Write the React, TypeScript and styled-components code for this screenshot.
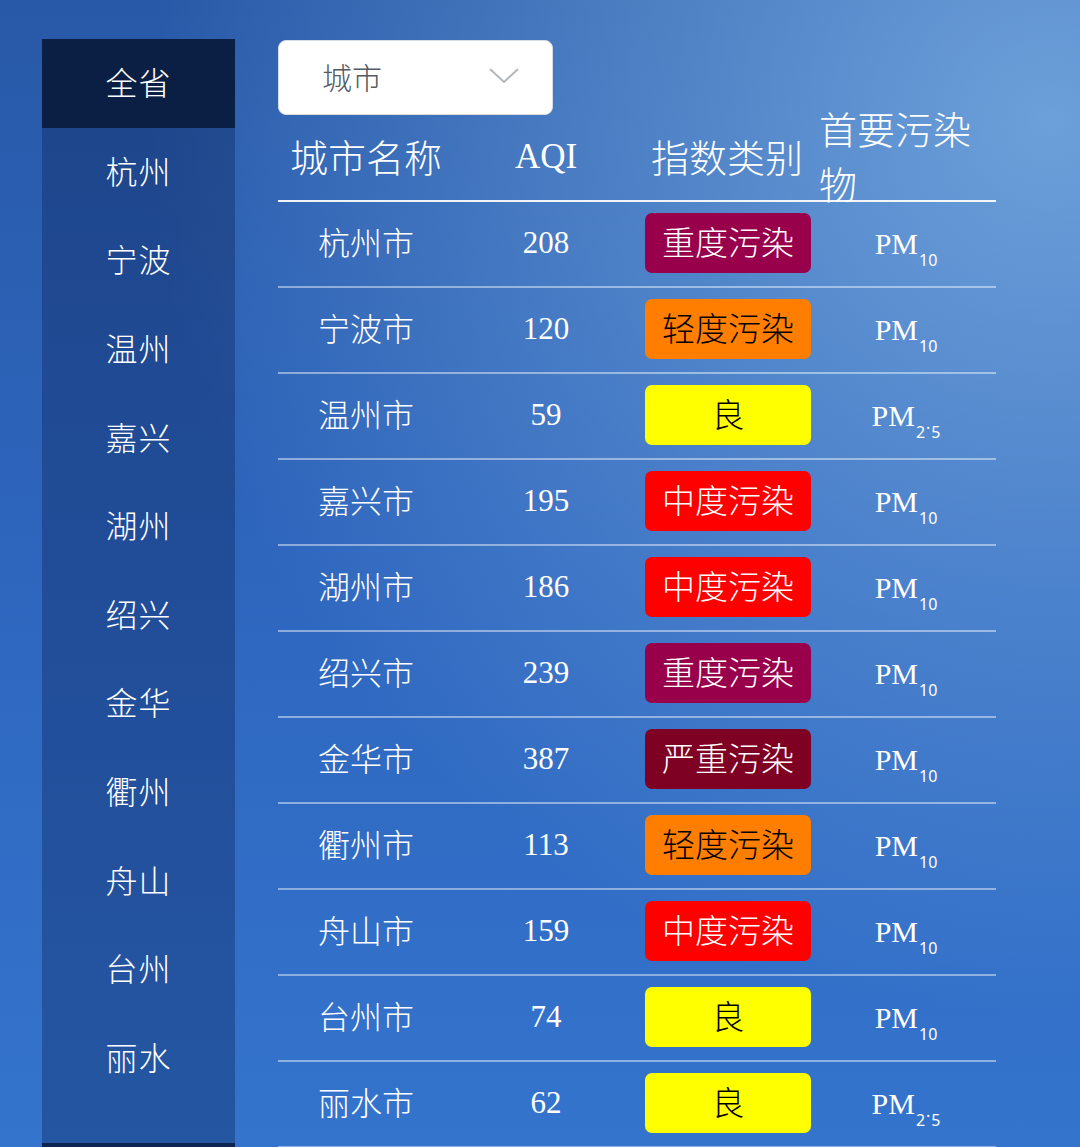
import styled, { createGlobalStyle } from "styled-components";

const GlobalStyle = createGlobalStyle`
  html, body {
    margin: 0;
    padding: 0;
  }
  body {
    font-family: "Liberation Serif", "Noto Sans CJK SC", serif;
    background: #2f68bf;
  }
`;

type Level = "heavy" | "light" | "good" | "moderate" | "severe";

interface Row {
  city: string;
  aqi: number;
  level: Level;
  label: string;
  pollutant: "10" | "2.5";
}

const levelColors: Record<Level, { bg: string; fg: string }> = {
  heavy: { bg: "#99004c", fg: "#ffffff" },
  light: { bg: "#ff7e00", fg: "#000000" },
  good: { bg: "#ffff00", fg: "#000000" },
  moderate: { bg: "#ff0000", fg: "#ffffff" },
  severe: { bg: "#7e0023", fg: "#ffffff" },
};

const regions = ["全省", "杭州", "宁波", "温州", "嘉兴", "湖州", "绍兴", "金华", "衢州", "舟山", "台州", "丽水"];

const rows: Row[] = [
  { city: "杭州市", aqi: 208, level: "heavy", label: "重度污染", pollutant: "10" },
  { city: "宁波市", aqi: 120, level: "light", label: "轻度污染", pollutant: "10" },
  { city: "温州市", aqi: 59, level: "good", label: "良", pollutant: "2.5" },
  { city: "嘉兴市", aqi: 195, level: "moderate", label: "中度污染", pollutant: "10" },
  { city: "湖州市", aqi: 186, level: "moderate", label: "中度污染", pollutant: "10" },
  { city: "绍兴市", aqi: 239, level: "heavy", label: "重度污染", pollutant: "10" },
  { city: "金华市", aqi: 387, level: "severe", label: "严重污染", pollutant: "10" },
  { city: "衢州市", aqi: 113, level: "light", label: "轻度污染", pollutant: "10" },
  { city: "舟山市", aqi: 159, level: "moderate", label: "中度污染", pollutant: "10" },
  { city: "台州市", aqi: 74, level: "good", label: "良", pollutant: "10" },
  { city: "丽水市", aqi: 62, level: "good", label: "良", pollutant: "2.5" },
];

const cjk = `"Noto Sans CJK SC", sans-serif`;

/* ── Page ── */

const Page = styled.div`
  display: flex;
  align-items: flex-start;
  gap: 43px;
  height: 1147px;
  overflow: hidden;
  padding: 39px 0 0 42px;
  box-sizing: border-box;
  background:
    radial-gradient(ellipse 900px 900px at 1050px 120px, rgba(120, 172, 226, 0.85), rgba(120, 172, 226, 0) 100%),
    linear-gradient(180deg, #2859a8 0%, #2e66be 50%, #3474cd 100%);
  color: #ffffff;
`;

/* ── Sidebar ── */

const Sidebar = styled.nav`
  display: flex;
  flex-direction: column;
  width: 193px;
  flex-shrink: 0;
  padding-bottom: 41px;
  background: rgba(10, 28, 80, 0.34);
  border-bottom: 6px solid #0d2550;
`;

const SideItem = styled.div<{ $active?: boolean }>`
  height: 88.6px;
  display: flex;
  align-items: center;
  justify-content: center;
  padding-bottom: 4px;
  box-sizing: border-box;
  font-family: ${cjk};
  font-weight: 300;
  font-size: 32px;
  letter-spacing: 1px;
  color: #ffffff;
  background: ${(p) => (p.$active ? "#0b1f44" : "transparent")};
`;

/* ── Main ── */

const Main = styled.div`
  display: flex;
  flex-direction: column;
  width: 718px;
  padding-top: 1px;
`;

const Select = styled.div`
  width: 275px;
  height: 75px;
  box-sizing: border-box;
  display: flex;
  align-items: center;
  justify-content: space-between;
  padding: 0 32px 4px 43px;
  background: #ffffff;
  border: 1px solid #d8dce4;
  border-radius: 8px;
  font-family: ${cjk};
  font-weight: 300;
  font-size: 30px;
  color: #555a60;
`;

const Chevron = () => (
  <svg width="32" height="18" viewBox="0 0 32 18" fill="none">
    <path d="M2 2 L16 15 L30 2" stroke="#b4b8bf" strokeWidth="2" strokeLinejoin="round" />
  </svg>
);

const Table = styled.div`
  display: flex;
  flex-direction: column;
`;

const Grid = styled.div`
  display: grid;
  grid-template-columns: 176px 184px 178px 180px;
`;

const HeadRow = styled(Grid)`
  grid-template-rows: 85px;
  height: 85px;
  border-bottom: 2px solid rgba(255, 255, 255, 0.92);
`;

const HeadCell = styled.div<{ $left?: boolean }>`
  display: flex;
  align-items: center;
  justify-content: ${(p) => (p.$left ? "flex-start" : "center")};
  padding-left: ${(p) => (p.$left ? "3px" : "0")};
  padding-bottom: 5px;
  box-sizing: border-box;
  height: 85px;
  font-family: ${cjk};
  font-weight: 300;
  font-size: 38px;
  line-height: 55px;
  color: #ffffff;
  white-space: ${(p) => (p.$left ? "normal" : "nowrap")};
`;

const AqiHead = styled(HeadCell)`
  font-family: "Liberation Serif", serif;
  font-weight: 400;
  font-size: 35px;
  padding-bottom: 2px;
`;

const BodyRow = styled(Grid)`
  height: 86px;
  box-sizing: border-box;
  border-bottom: 2px solid rgba(255, 255, 255, 0.45);
`;

const Cell = styled.div`
  display: flex;
  align-items: center;
  justify-content: center;
  color: #ffffff;
`;

const CityName = styled(Cell)`
  font-family: ${cjk};
  font-weight: 300;
  font-size: 32px;
  padding-bottom: 6px;
`;

const Aqi = styled(Cell)`
  font-size: 31px;
  padding-bottom: 2px;
`;

const Badge = styled.div<{ $bg: string; $fg: string }>`
  width: 166px;
  height: 60px;
  margin-left: 2px;
  margin-bottom: 2px;
  border-radius: 7px;
  display: flex;
  align-items: center;
  justify-content: center;
  padding-bottom: 4px;
  box-sizing: border-box;
  background: ${(p) => p.$bg};
  color: ${(p) => p.$fg};
  font-family: ${cjk};
  font-weight: 300;
  font-size: 33px;
`;

const Pollutant = styled(Cell)`
  font-size: 30px;
`;

const Formula = styled.span`
  white-space: nowrap;
`;

const Sub = styled.span`
  font-family: "Noto Sans", sans-serif;
  font-size: 16px;
  position: relative;
  top: 12px;
  margin-left: 1px;
`;

const SubDot = styled.span`
  position: relative;
  top: -9px;
  margin: 0 1px;
`;

export default function App() {
  return (
    <>
      <GlobalStyle />
      <Page>
        <Sidebar>
          {regions.map((r, i) => (
            <SideItem key={r} $active={i === 0}>
              {r}
            </SideItem>
          ))}
        </Sidebar>
        <Main>
          <Select>
            <span>城市</span>
            <Chevron />
          </Select>
          <Table>
            <HeadRow>
              <HeadCell>城市名称</HeadCell>
              <AqiHead>AQI</AqiHead>
              <HeadCell>指数类别</HeadCell>
              <HeadCell $left>首要污染物</HeadCell>
            </HeadRow>
            {rows.map((row) => {
              const c = levelColors[row.level];
              return (
                <BodyRow key={row.city}>
                  <CityName>{row.city}</CityName>
                  <Aqi>{row.aqi}</Aqi>
                  <Cell>
                    <Badge $bg={c.bg} $fg={c.fg}>
                      {row.label}
                    </Badge>
                  </Cell>
                  <Pollutant>
                    <Formula>
                      PM
                      {row.pollutant === "10" ? (
                        <Sub>10</Sub>
                      ) : (
                        <Sub>
                          2<SubDot>.</SubDot>5
                        </Sub>
                      )}
                    </Formula>
                  </Pollutant>
                </BodyRow>
              );
            })}
          </Table>
        </Main>
      </Page>
    </>
  );
}
